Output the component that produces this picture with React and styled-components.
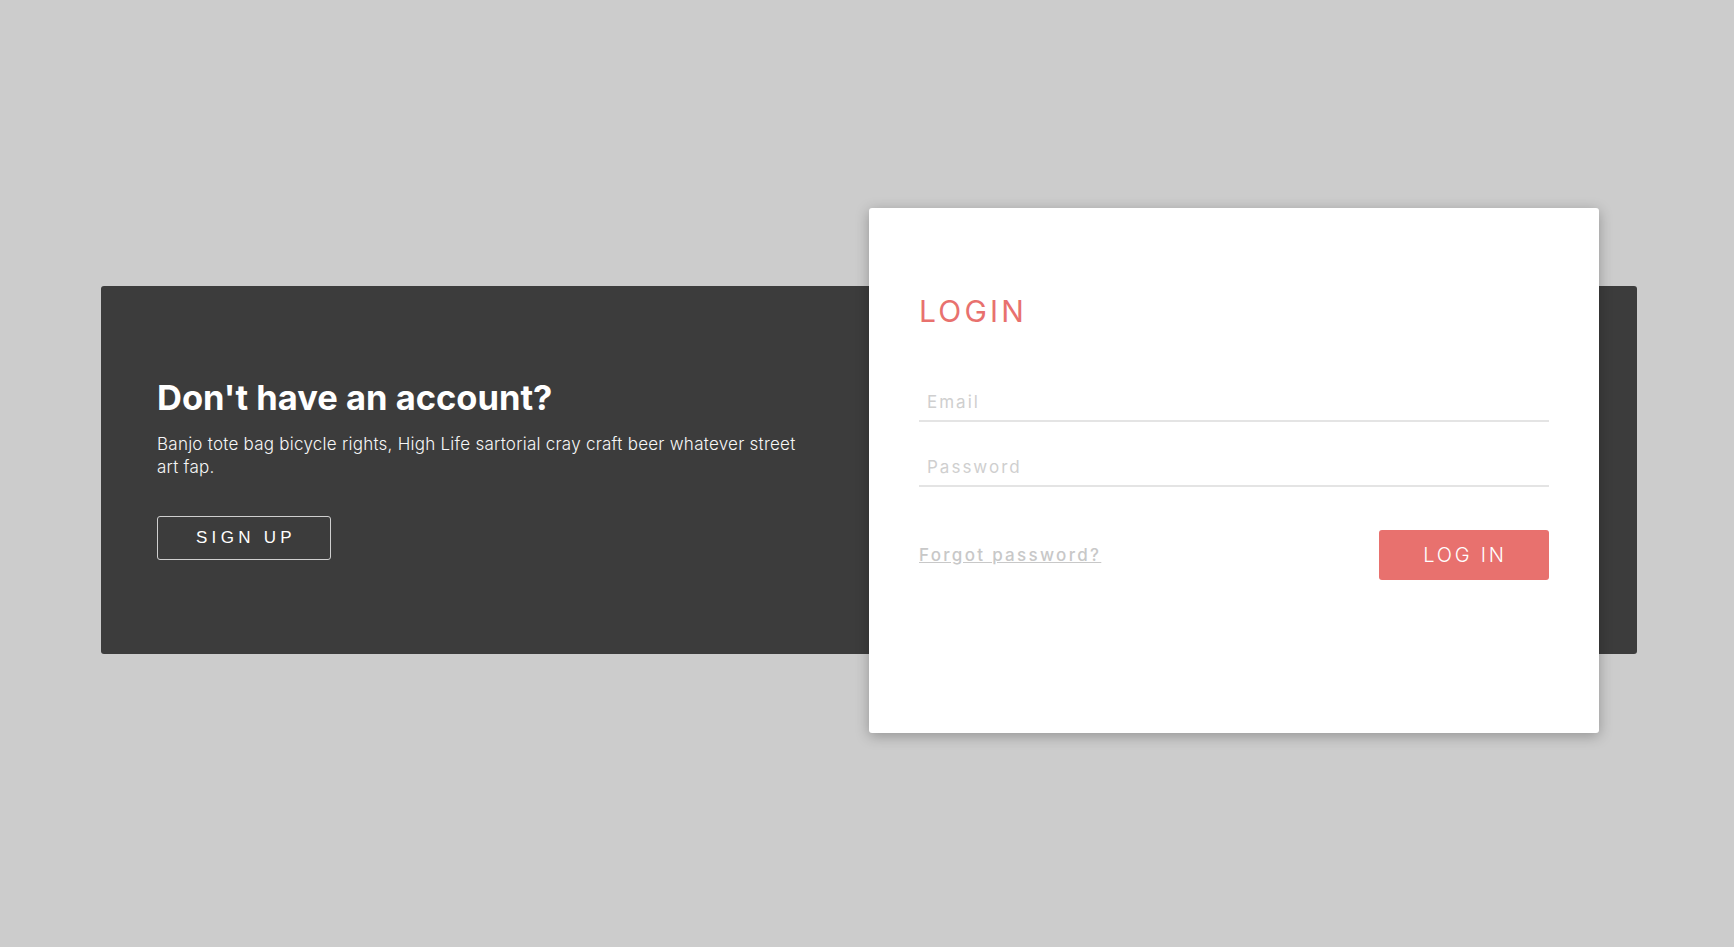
import React, { useState } from 'react'
import styled, { createGlobalStyle } from 'styled-components'

const GlobalStyle = createGlobalStyle`
    html, body {
        margin: 0;
        padding: 0;
        background: #cccccc;
        font-family: Inter, "Open Sans", "Liberation Sans", sans-serif;
    }
    * {
        box-sizing: border-box;
    }
`

const Page = styled.div`
    min-height: 100vh;
    display: flex;
    align-items: center;
    justify-content: center;
    padding: 0 0 7px 4px;
`

const Panel = styled.div`
    width: 1536px;
    height: 368px;
    background: #3c3c3c;
    border-radius: 3px;
    display: flex;
    align-items: center;
`

const SignupSide = styled.div`
    flex: 0 0 768px;
    height: 100%;
    padding: 0 56px 2px;
    display: flex;
    flex-direction: column;
    justify-content: center;
    align-items: flex-start;
    color: #ffffff;
`

const SideTitle = styled.h2`
    margin: 0;
    font-size: 34.5px;
    line-height: 40px;
    font-weight: 700;
    letter-spacing: 0;
`

const SideText = styled.p`
    margin: 15px 0 0;
    font-size: 17px;
    line-height: 23px;
    font-weight: 300;
    letter-spacing: 0.25px;
    color: #f6f6f6;
`

const OutlineButton = styled.button`
    margin-top: 37px;
    width: 174px;
    height: 44px;
    background: transparent;
    border: 1px solid #cfcfcf;
    border-radius: 3px;
    color: #ffffff;
    font-family: "Liberation Sans", Arial, sans-serif;
    font-size: 17px;
    letter-spacing: 4.3px;
    padding: 0 0 0 4px;
    cursor: pointer;
`

const Card = styled.div`
    flex: none;
    width: 730px;
    height: 525px;
    background: #ffffff;
    border-radius: 3px;
    box-shadow: 0 3px 14px rgba(0, 0, 0, 0.28);
    padding: 85px 50px 0;
`

const CardTitle = styled.h1`
    margin: 0;
    font-size: 30px;
    line-height: 36px;
    font-weight: 400;
    letter-spacing: 3.2px;
    color: #e8716e;
`

const Form = styled.form`
    margin-top: 51px;
    display: flex;
    flex-direction: column;
    gap: 23px;
`

const Field = styled.input`
    width: 100%;
    height: 42px;
    border: none;
    border-bottom: 2px solid #e4e4e4;
    padding: 4px 8px 0;
    font-family: inherit;
    font-size: 17px;
    letter-spacing: 2px;
    color: #555;
    outline: none;
    &::placeholder {
        color: #cfcfcf;
    }
`

const Actions = styled.div`
    margin-top: 20px;
    display: flex;
    justify-content: space-between;
    align-items: center;
`

const ForgotLink = styled.a`
    color: #c8c8c8;
    font-size: 17px;
    font-weight: 500;
    letter-spacing: 2.3px;
    text-decoration: underline;
    cursor: pointer;
`

const PrimaryButton = styled.button`
    width: 170px;
    height: 50px;
    border: none;
    border-radius: 3px;
    background: #e8716e;
    color: #ffffff;
    font-family: inherit;
    font-size: 20px;
    font-weight: 300;
    letter-spacing: 2.8px;
    padding: 0 0 0 2px;
    cursor: pointer;
`

const App = () => {
    const [email, setEmail] = useState('')
    const [password, setPassword] = useState('')

    return (
        <>
            <GlobalStyle />
            <Page>
                <Panel>
                    <SignupSide>
                        <SideTitle>Don't have an account?</SideTitle>
                        <SideText>
                            Banjo tote bag bicycle rights, High Life sartorial cray craft beer whatever street art fap.
                        </SideText>
                        <OutlineButton>SIGN UP</OutlineButton>
                    </SignupSide>
                    <Card>
                        <CardTitle>LOGIN</CardTitle>
                        <Form onSubmit={e => e.preventDefault()}>
                            <Field type='email' placeholder='Email' value={email} onChange={e => setEmail(e.target.value)} />
                            <Field type='password' placeholder='Password' value={password} onChange={e => setPassword(e.target.value)} />
                            <Actions>
                                <ForgotLink>Forgot password?</ForgotLink>
                                <PrimaryButton type='submit'>LOG IN</PrimaryButton>
                            </Actions>
                        </Form>
                    </Card>
                </Panel>
            </Page>
        </>
    )
}

export default App
